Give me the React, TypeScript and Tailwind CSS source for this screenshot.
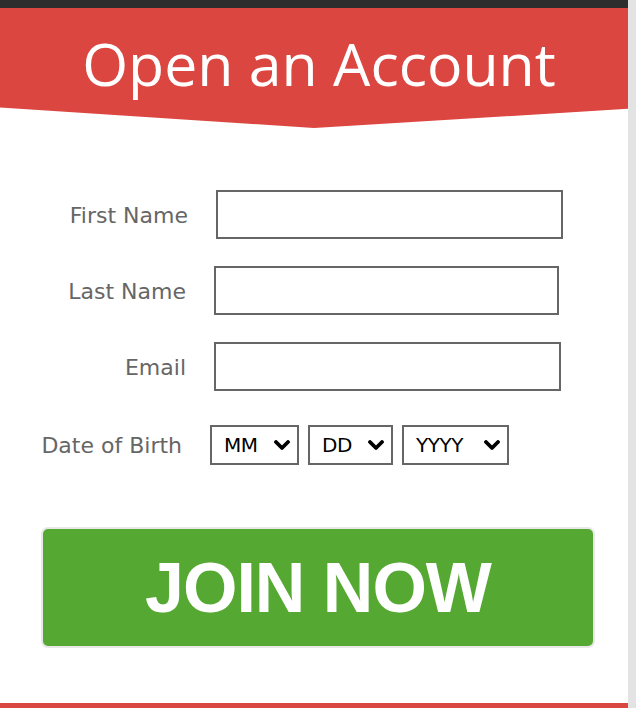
import React from "react";

const LABEL = "text-[22px] text-[#666] [font-family:'DejaVu_Sans',Verdana,sans-serif] leading-none";

const ROWS = [
  { label: "First Name", labelW: "w-[188px]", inputW: "w-[347px]" },
  { label: "Last Name", labelW: "w-[186px]", inputW: "w-[345px]" },
  { label: "Email", labelW: "w-[186px]", inputW: "w-[347px]" },
];

const Chevron = () => (
  <svg width="16" height="11" viewBox="0 0 16 11" className="shrink-0">
    <polyline points="2,2 8,8 14,2" fill="none" stroke="#000" strokeWidth="3.8" strokeLinecap="round" strokeLinejoin="round" />
  </svg>
);

function FakeSelect({ text, w }: { text: string; w: string }) {
  return (
    <div className={`${w} h-[40px] border-2 border-[#666] bg-white flex items-center justify-between pl-[12px] pr-[7px]`}>
      <span className="text-[20px] text-black leading-none [font-family:'DejaVu_Sans',Verdana,sans-serif] tracking-[-0.5px]">{text}</span>
      <Chevron />
    </div>
  );
}

export default function App() {
  return (
    <div className="w-[636px] h-[708px] flex bg-white overflow-hidden">
      <div className="w-[628px] flex flex-col">
        {/* top dark bar */}
        <div className="h-[8px] w-[630px] bg-[#2d2d2d] shrink-0" />

        {/* banner */}
        <div className="h-[120px] bg-[#dc4641] shrink-0 pt-[26px] [clip-path:polygon(0_0,100%_0,100%_84%,50%_100%,0_83%)]">
          <h1 className="text-[59px] leading-[58px] text-white text-center pl-[10px] [font-family:'Open_Sans',sans-serif] font-normal">
            Open an Account
          </h1>
        </div>

        {/* form */}
        <div className="mt-[62px] flex flex-col gap-[27px]">
          {ROWS.map(({ label, labelW, inputW }) => (
            <div key={label} className="flex items-center">
              <div className={`${labelW} text-right pt-[3px] ${LABEL}`}>{label}</div>
              <div className={`ml-[28px] ${inputW} h-[49px] border-2 border-[#666] bg-white`} />
            </div>
          ))}
        </div>

        <div className="mt-[34px] flex items-center">
          <div className={`w-[182px] text-right pt-[2px] ${LABEL}`}>Date of Birth</div>
          <div className="ml-[28px] flex gap-[9px]">
            <FakeSelect text="MM" w="w-[89px]" />
            <FakeSelect text="DD" w="w-[85px]" />
            <FakeSelect text="YYYY" w="w-[107px]" />
          </div>
        </div>

        <button className="mt-[62px] ml-[41px] w-[554px] h-[121px] rounded-[7px] bg-[#55a932] border-2 border-[#e8e8e8] flex items-center justify-center">
          <span className="text-white text-[70px] font-bold tracking-[-1px] leading-none [font-family:'Liberation_Sans',Arial,sans-serif]">
            JOIN NOW
          </span>
        </button>

        <div className="mt-auto h-[5px] bg-[#dc4641]" />
      </div>
      <div className="w-[8px] bg-[#e3e3e3]" />
    </div>
  );
}
